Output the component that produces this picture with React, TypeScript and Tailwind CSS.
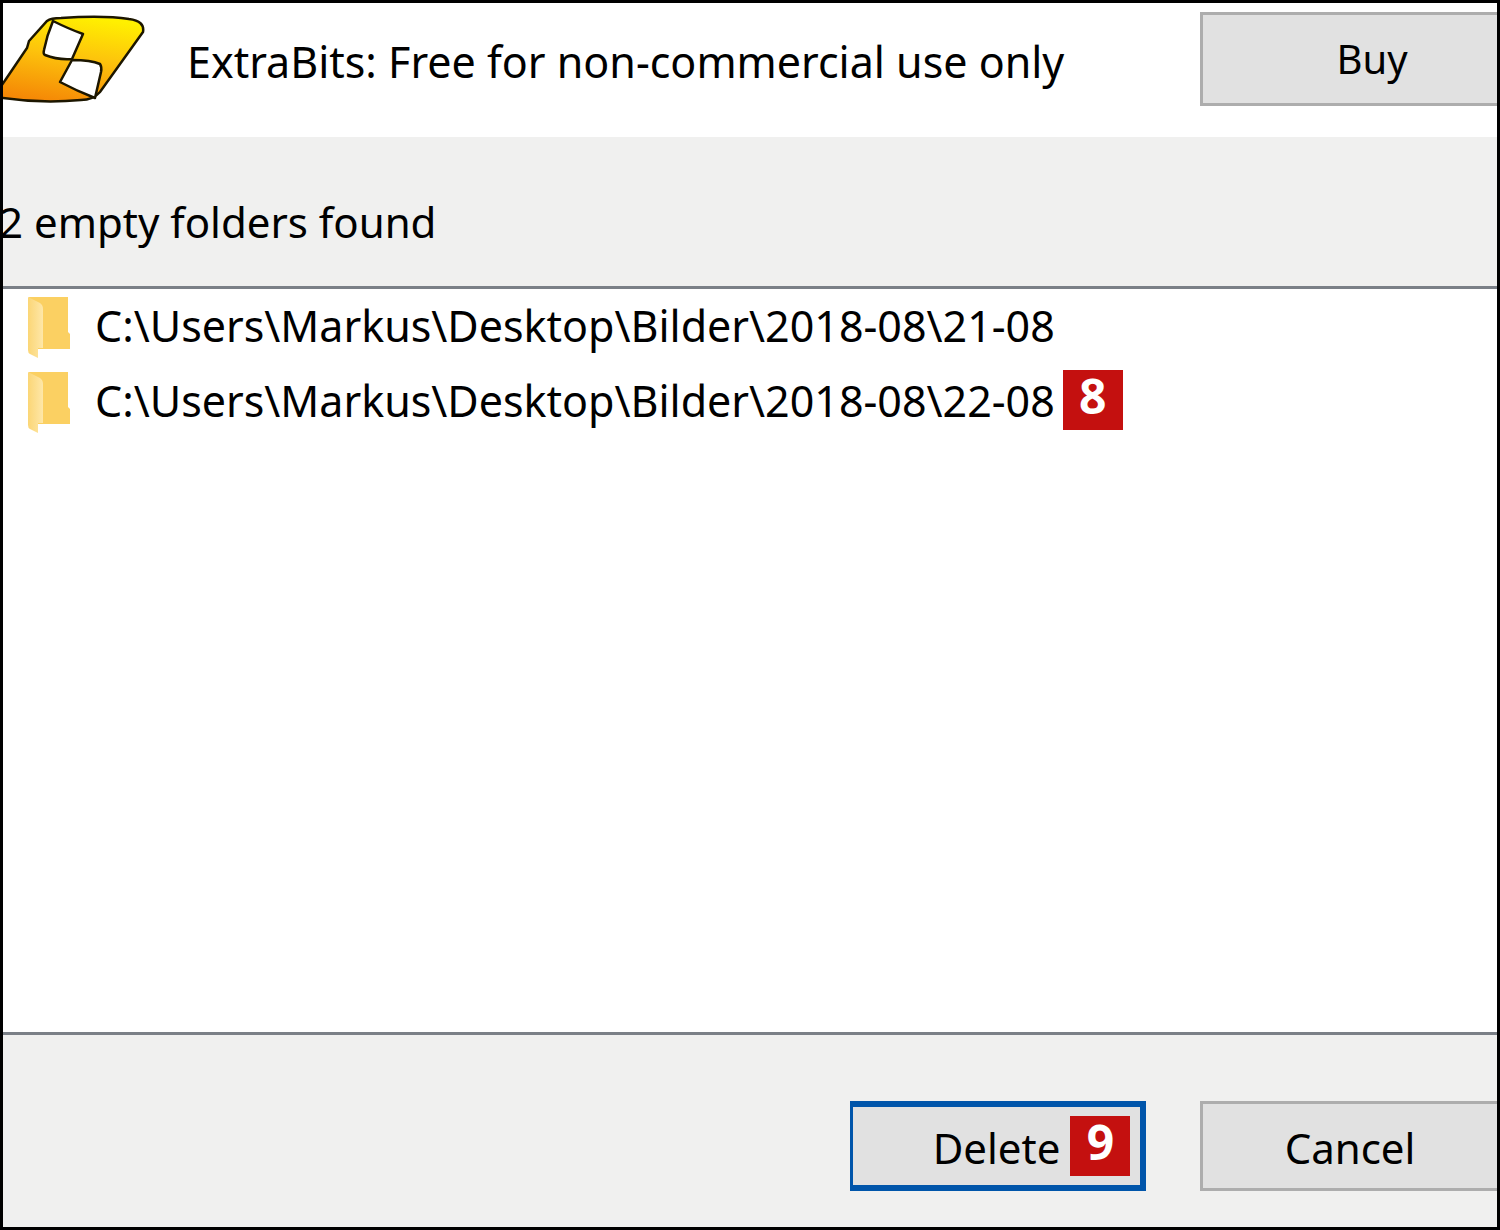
import { ButtonHTMLAttributes, ReactNode } from 'react';
import { clsx } from 'clsx';

const folders = [
  { path: 'C:\\Users\\Markus\\Desktop\\Bilder\\2018-08\\21-08' },
  { path: 'C:\\Users\\Markus\\Desktop\\Bilder\\2018-08\\22-08', step: 8 },
];

// ─── Button ────────────────────────────────────────────────────
type BtnVariant = 'plain' | 'focused';
const btnVariants: Record<BtnVariant, string> = {
  plain: 'border-y-3 border-l-3 border-[#adadad]',
  focused: 'border-6 border-l-3 border-[#0055aa]',
};

function Button({ variant = 'plain', className, children, ...props }:
  ButtonHTMLAttributes<HTMLButtonElement> & { variant?: BtnVariant }) {
  return (
    <button type="button" className={clsx('flex shrink-0 items-center justify-center bg-[#e1e1e1] leading-[48px]', btnVariants[variant], className)} {...props}>
      {children}
    </button>
  );
}

// ─── Step marker ───────────────────────────────────────────────
function Step({ children, className }: { children: ReactNode; className?: string }) {
  return (
    <span className={clsx('flex size-[60px] shrink-0 justify-center bg-[#c4100f] text-[48px] leading-[52px] font-bold text-white', className)}>
      {children}
    </span>
  );
}

// ─── Icons ─────────────────────────────────────────────────────
function Logo() {
  return (
    <svg viewBox="0 -1 144 92" className="h-[92px] w-36 shrink-0" aria-hidden="true">
      <defs>
        <linearGradient id="logo" x1="0.62" y1="0" x2="0.35" y2="1">
          <stop offset="0" stopColor="#fff000" />
          <stop offset="0.45" stopColor="#fdc40c" />
          <stop offset="1" stopColor="#f58806" />
        </linearGradient>
      </defs>
      <path d="M-6 79 L3 66 L24 35 L26 28 L44 8 Q48 5 58 5 Q100 2 126 6 Q142 8 140 19 L97 79 Q90 87 78 87 Q36 91 -6 84 Z" fill="url(#logo)" stroke="#1c1600" strokeWidth="2.5" />
      <path d="M50 8 Q66 16 80 21 L69 46 Q54 47 42 42 Q40 41 41 37 Q44 22 50 8 Z" fill="#fff" stroke="#1c1600" strokeWidth="2.5" strokeLinejoin="round" />
      <path d="M69 47 Q88 47 97 51 Q99 54 98 59 L92 85 Q74 78 57 69 Z" fill="#fff" stroke="#1c1600" strokeWidth="2.5" strokeLinejoin="round" />
    </svg>
  );
}

function FolderIcon() {
  return (
    <svg viewBox="0 0 44 62" className="h-[62px] w-11 shrink-0" aria-hidden="true">
      <defs>
        <linearGradient id="flap" x1="0" y1="0" x2="1" y2="0">
          <stop offset="0" stopColor="#fbd676" />
          <stop offset="1" stopColor="#fee7a8" />
        </linearGradient>
      </defs>
      <path d="M2 1 H41 V36 L43 38 V53 H10 Z" fill="#fbd062" />
      <path d="M1 1 L13 7 Q16 9 16 13 V52 H11 V62 L3 58 Q1 57 1 54 Z" fill="url(#flap)" />
    </svg>
  );
}

export default function App() {
  return (
    <div className="flex min-h-screen flex-col overflow-hidden border-3 border-black bg-[#f0f0ef] font-['Noto_Sans',sans-serif] text-black">
      <header className="flex h-[134px] items-start bg-white pt-[9px]">
        <Logo />
        <h1 className="ml-10 flex-1 pt-[22px] text-[43px] leading-[56px] whitespace-nowrap">ExtraBits: Free for non-commercial use only</h1>
        <Button className="h-[94px] w-[297px] pl-11 text-[40px]">Buy</Button>
      </header>

      <p className="-ml-1 pt-[57px] pb-9 text-[42px] leading-[56px]">2 empty folders found</p>

      <ul className="flex-1 border-y-3 border-[#7b8087] bg-white pl-6">
        {folders.map((f) => (
          <li key={f.path} className="flex h-[75px] items-center text-[43px] leading-[56px]">
            <FolderIcon />
            <span className="ml-6 pb-0.5 whitespace-nowrap">{f.path}</span>
            {f.step && <Step className="mb-1 ml-2">{f.step}</Step>}
          </li>
        ))}
      </ul>

      <footer className="flex justify-end gap-[54px] pt-[66px] pb-9 text-[42px]">
        <Button variant="focused" className="h-[90px] w-[296px] pl-[70px]">
          <span className="pt-1">Delete</span>
          <Step className="ml-2.5">9</Step>
        </Button>
        <Button className="h-[90px] w-[297px]">
          <span className="pt-1">Cancel</span>
        </Button>
      </footer>
    </div>
  );
}
